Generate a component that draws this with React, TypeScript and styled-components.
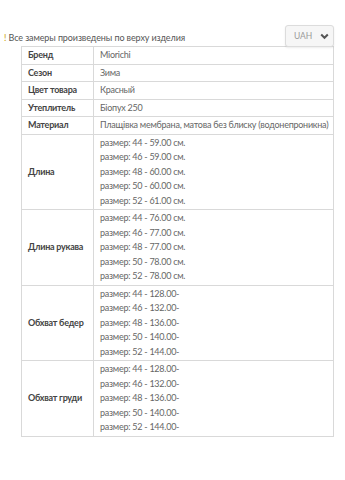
import React from 'react';
import styled, { createGlobalStyle } from 'styled-components';

interface Spec {
  label: string;
  values: string[];
}

const SPECS: Spec[] = [
  { label: 'Бренд', values: ['Miorichi'] },
  { label: 'Сезон', values: ['Зима'] },
  { label: 'Цвет товара', values: ['Красный'] },
  { label: 'Утеплитель', values: ['Біопух 250'] },
  { label: 'Материал', values: ['Плащівка мембрана, матова без блиску (водонепроникна)'] },
  {
    label: 'Длина',
    values: [
      'размер: 44 - 59.00 см.',
      'размер: 46 - 59.00 см.',
      'размер: 48 - 60.00 см.',
      'размер: 50 - 60.00 см.',
      'размер: 52 - 61.00 см.',
    ],
  },
  {
    label: 'Длина рукава',
    values: [
      'размер: 44 - 76.00 см.',
      'размер: 46 - 77.00 см.',
      'размер: 48 - 77.00 см.',
      'размер: 50 - 78.00 см.',
      'размер: 52 - 78.00 см.',
    ],
  },
  {
    label: 'Обхват бедер',
    values: [
      'размер: 44 - 128.00-',
      'размер: 46 - 132.00-',
      'размер: 48 - 136.00-',
      'размер: 50 - 140.00-',
      'размер: 52 - 144.00-',
    ],
  },
  {
    label: 'Обхват груди',
    values: [
      'размер: 44 - 128.00-',
      'размер: 46 - 132.00-',
      'размер: 48 - 136.00-',
      'размер: 50 - 140.00-',
      'размер: 52 - 144.00-',
    ],
  },
];

const GlobalStyle = createGlobalStyle`
  body {
    margin: 0;
    background: #fff;
    font-family: Lato, "Open Sans", sans-serif;
  }
`;

const Page = styled.div`
  width: 345px;
  padding: 25px 11px 0 4px;
  box-sizing: border-box;
`;

const TopBar = styled.div`
  display: flex;
  justify-content: space-between;
  align-items: flex-end;
  position: relative;
  z-index: 1;
`;

const Note = styled.div`
  font-size: 9px;
  line-height: 12px;
  color: #555;
  padding-bottom: 3px;
  letter-spacing: -0.1px;
`;

const Bang = styled.span`
  color: #c9a000;
`;

const CurrencySelect = styled.div`
  width: 49px;
  height: 22px;
  box-sizing: border-box;
  border: 1px solid #dcdcdc;
  border-radius: 3px;
  background: #f6f6f6;
  box-shadow: 0 1px 2px rgba(0, 0, 0, 0.08);
  display: flex;
  align-items: center;
  justify-content: space-between;
  padding: 0 4px 0 8px;
  font-size: 8.5px;
  color: #9a9a9a;
`;

const Table = styled.table`
  margin: -1px 0 0 17px;
  width: 313px;
  table-layout: fixed;
  border-collapse: collapse;
  border: 1px solid #d6d6d6;
  font-size: 9px;
  letter-spacing: -0.25px;
`;

const LabelCol = styled.col`
  width: 72px;
`;

const LabelCell = styled.td`
  padding: 1px 6px;
  border: 1px solid #d9d9d9;
  font-weight: 700;
  color: #444;
  line-height: 14.5px;
  white-space: nowrap;
  vertical-align: middle;
`;

const ValueCell = styled.td`
  padding: 1px 6px;
  border: 1px solid #d9d9d9;
  color: #666;
  line-height: 14.5px;
  white-space: nowrap;
`;

const Line = styled.div`
  line-height: 14.5px;
`;

const Chevron = () => (
  <svg width="9" height="7" viewBox="0 0 9 7">
    <path d="M1.2 1.5 L4.5 4.8 L7.8 1.5" fill="none" stroke="#555" strokeWidth="2" />
  </svg>
);

export default function App() {
  return (
    <Page>
      <GlobalStyle />
      <TopBar>
        <Note>
          <Bang>!</Bang> Все замеры произведены по верху изделия
        </Note>
        <CurrencySelect>
          <span>UAH</span>
          <Chevron />
        </CurrencySelect>
      </TopBar>
      <Table>
        <colgroup>
          <LabelCol />
          <col />
        </colgroup>
        <tbody>
          {SPECS.map(spec => (
            <tr key={spec.label}>
              <LabelCell>{spec.label}</LabelCell>
              <ValueCell>
                {spec.values.map(v => (
                  <Line key={v}>{v}</Line>
                ))}
              </ValueCell>
            </tr>
          ))}
        </tbody>
      </Table>
    </Page>
  );
}
